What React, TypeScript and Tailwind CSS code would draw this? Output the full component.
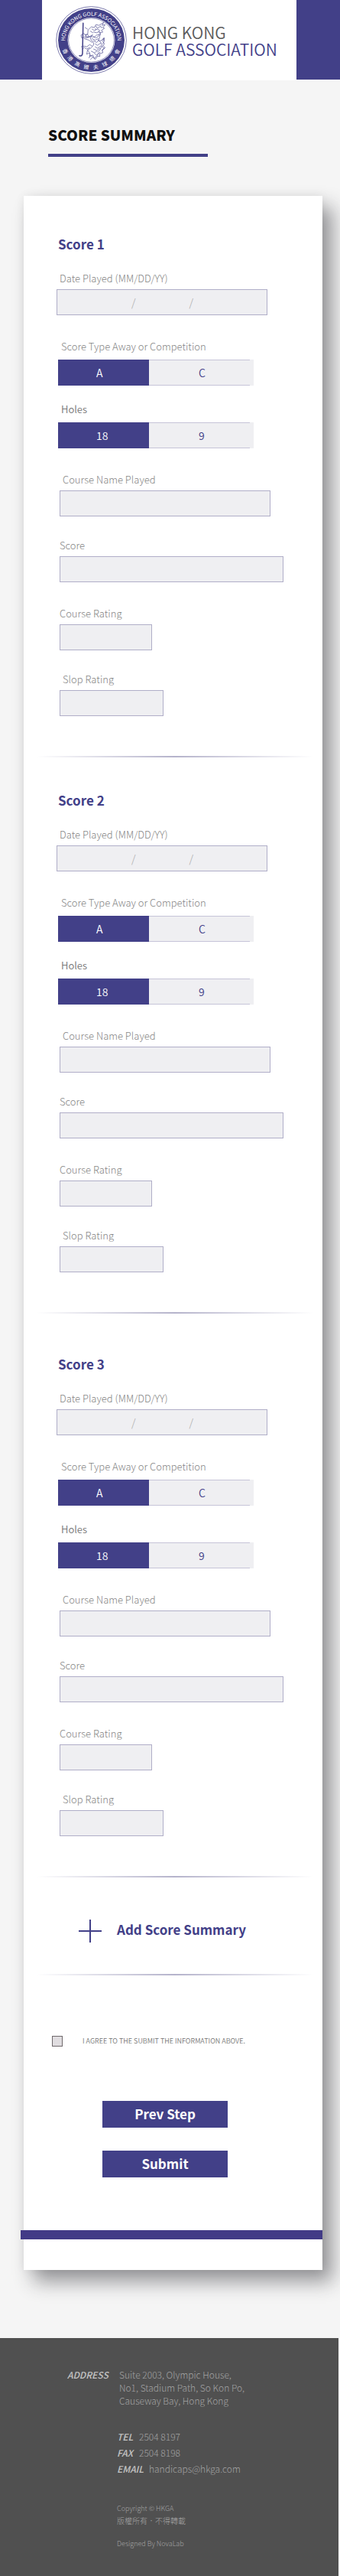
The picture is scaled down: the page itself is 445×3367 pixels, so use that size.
import { useId, useState } from 'react';

type FieldProps = { label: string; className: string; labelClass: string; inputClass: string };

const LABEL = 'block text-[13px] leading-5 font-light text-[#858585]';
const BOX = 'h-[34px] border border-[#b0aec8] bg-[#efeff2]';

function Field({ label, className, labelClass, inputClass }: FieldProps) {
  const id = useId();
  return (
    <div className={className}>
      <label htmlFor={id} className={`${LABEL} ${labelClass}`}>
        {label}
      </label>
      <input id={id} type="text" className={`${BOX} block max-w-full px-3 text-[13px] outline-none ${inputClass}`} />
    </div>
  );
}

function DateField() {
  const id = useId();
  const part = 'min-w-0 bg-transparent text-center text-[13px] outline-none';
  return (
    <div className="mt-[23px] pl-[43px]">
      <label htmlFor={id} className={`${LABEL} pl-1`}>
        Date Played (MM/DD/YY)
      </label>
      <div className={`${BOX} mt-1 flex w-[276px] max-w-full items-center text-[14px] font-light text-[#a8a8a8]`}>
        <input id={id} type="text" className={`${part} w-[97px]`} />
        <span>/</span>
        <input type="text" aria-label="Day" className={`${part} w-[70px]`} />
        <span>/</span>
        <input type="text" aria-label="Year" className={`${part} flex-1`} />
      </div>
    </div>
  );
}

type ToggleProps = { label: string; options: [string, string]; className: string; labelClass: string };

function Toggle({ label, options, className, labelClass }: ToggleProps) {
  const id = useId();
  const [active, setActive] = useState(0);
  const on = 'bg-[#424088] border-[#424088] text-white';
  const off = 'bg-[#efeff2] border-[#c6c4d8] text-[#424088]';
  return (
    <div className={`pl-[45px] ${className}`}>
      <p id={id} className={`pl-1 text-[13px] leading-5 ${labelClass}`}>
        {label}
      </p>
      <div role="group" aria-labelledby={id} className="mt-[7px] flex h-[34px] text-[14px] font-[350]">
        <button
          type="button"
          aria-pressed={active === 0}
          onClick={() => setActive(0)}
          className={`w-[119px] border-y pl-[50px] text-left ${active === 0 ? on : off}`}
        >
          {options[0]}
        </button>
        <button
          type="button"
          aria-pressed={active === 1}
          onClick={() => setActive(1)}
          className={`w-[132px] border-y pl-[65px] text-left ${active === 1 ? on : off}`}
        >
          {options[1]}
        </button>
        <span className="w-[5px] bg-[#efeff2]" />
      </div>
    </div>
  );
}

function Divider() {
  return (
    <div className="mr-3 ml-[17px] h-[2px] bg-linear-to-r from-transparent via-[#b5b3cb] to-transparent" />
  );
}

function ScoreSection({ index, className }: { index: number; className: string }) {
  return (
    <section className={className}>
      <h2 className="pl-[45px] text-[17px] leading-6 font-bold text-[#424088]">Score {index}</h2>
      <DateField />
      <Toggle
        label="Score Type Away or Competition"
        options={['A', 'C']}
        className="mt-[31px]"
        labelClass="font-light text-[#858585]"
      />
      <Toggle label="Holes" options={['18', '9']} className="mt-[21px]" labelClass="font-[350] text-[#777777]" />
      <Field label="Course Name Played" className="mt-[31px] pl-[47px]" labelClass="pl-1" inputClass="mt-1 w-[276px]" />
      <Field label="Score" className="mt-7 pl-[47px]" labelClass="" inputClass="mt-1 w-[293px]" />
      <Field label="Course Rating" className="mt-[31px] pl-[47px]" labelClass="" inputClass="mt-1 w-[121px]" />
      <Field label="Slop Rating" className="mt-7 pl-[47px]" labelClass="pl-1" inputClass="mt-1 w-[136px]" />
    </section>
  );
}

const RING_CHARS = ['香', '港', '高', '爾', '夫', '球', '總', '會'];
const RING_ANGLES = [66, 48, 29, 10, -9, -28, -47, -65];

function Emblem() {
  return (
    <svg viewBox="-46 -46 92 92" preserveAspectRatio="none" className="h-[89px] w-[93px] shrink-0" aria-hidden="true">
      <circle r="45.3" fill="#fff" stroke="#424088" strokeWidth="0.7" />
      <circle r="43" fill="#424088" />
      <circle r="30.6" fill="#fff" />
      <circle r="29.6" fill="none" stroke="#424088" strokeWidth="0.6" />
      <path id="ring-top" d="M-34 1 A34 34 0 0 1 34 1" fill="none" />
      <text fill="#fff" fontSize="7" textAnchor="middle">
        <textPath href="#ring-top" startOffset="50%">
          HONG KONG GOLF ASSOCIATION
        </textPath>
      </text>
      {RING_CHARS.map((char, i) => (
        <text
          key={char}
          y="39.5"
          fill="#fff"
          fontSize="7"
          textAnchor="middle"
          transform={`rotate(${RING_ANGLES[i]})`}
        >
          {char}
        </text>
      ))}
      <g fill="none" stroke="#424088" strokeLinecap="round" strokeLinejoin="round">
        <path d="M-10.6 -23 L-11.4 18 Q-11.8 22 -15.4 21" strokeWidth="1.5" />
        <g strokeWidth="0.65">
          <path d="M-13 -7 l3-2 3 2 2-1 2 3-3 2-3-1-3 1z M-8 -5 l5 1 4-3 M-9 -2 l6 2 4 3" />
          <path d="M-4 -14 l4-4 4 1 2-4 4 1 6-4-2 4 4-1-3 4 2 1-4 3 2 2-4 1 1 3-5 0-3 3-5-1-4 1-3-3 3-1z" />
          <path d="M1 -15 l3 2 4-2 3 2 M3 -11 l4 1 4-2 M6 -19 l2 3 4-3 M-1 -12 l3 2 M5 -15 h1 M-5 -15 l-3-2 M9 -12 l3 3 M12 -18 l2 1" />
          <path d="M2 -7 q-5 3-2 7 q5 4 2 8 q-3 4-7 5 l2 3 M10 -8 q2 5-1 8 q6 4 4 9 q-1 5-5 7" />
          <path d="M3 -5 l3 2 3-2 M1 -2 l4 2 4-2 M3 1 l4 2 3-3 M5 5 l3 2 4-3 M5 9 l3 2 4-3 M3 12 l4 2 4-3 M0 15 l4 2 3-2" />
          <path d="M-13 9 l4-1 3 1 4-3 3 2 M-12 12 l3-2 3 2 4-2 M-5 14 l-1 5 4-2 0 5 4-2 2 5 3-4 4 1 0-4 4-1-1-4 3-2-3-2 3-4-2-3 2-5-3 3-3 1" />
          <path d="M-3 24 l2-4 3 3 M-1 26 l3-3 3 3 3-4 M4 18 l3 2 3-3 M8 20 l3-4 M14 0 l2-3 1 4-2 4 M16 8 l2 2-4 4" />
        </g>
      </g>
    </svg>
  );
}

function ContactRow({ label, value, labelClass, href }: { label: string; value: string; labelClass: string; href: string }) {
  return (
    <div className="flex">
      <dt className={`font-medium text-[#c3c3c3] italic ${labelClass}`}>{label}</dt>
      <dd>
        <a href={href}>{value}</a>
      </dd>
    </div>
  );
}

export default function App() {
  const agreeId = useId();
  const action = 'h-[35px] w-[164px] bg-[#424088] pb-[2px] text-[17px] leading-6 font-bold text-white';
  return (
    <div className="bg-[#f5f5f5] font-['Noto_Sans_CJK_TC','Noto_Sans',sans-serif]">
      <header className="h-[104px] bg-[#424088] pr-[57px] pl-[55px]">
        <div className="flex h-[105px] items-center gap-[7px] bg-white pl-[18px]">
          <Emblem />
          <div className="text-[21px] leading-[22px] font-[350] whitespace-nowrap">
            <div className="text-[#5a5a5a]">HONG KONG</div>
            <div className="text-[#424088]">GOLF ASSOCIATION</div>
          </div>
        </div>
      </header>

      <main className="pt-[60px] pb-[89px]">
        <div className="pl-[63px]">
          <h1 className="text-[19px] leading-6 font-black text-[#111111]">SCORE SUMMARY</h1>
          <div className="mt-[13px] h-1 w-[209px] bg-[#424088]" />
        </div>

        <form
          onSubmit={(event) => event.preventDefault()}
          className="mt-[51px] mr-[23px] ml-[31px] bg-white pb-10 shadow-[13px_15px_24px_rgba(30,30,38,0.45),0_0_12px_rgba(0,0,0,0.06)]"
        >
          <ScoreSection index={1} className="pt-[51px] pb-[52px]" />
          <Divider />
          <ScoreSection index={2} className="pt-11 pb-[52px]" />
          <Divider />
          <ScoreSection index={3} className="pt-[54px] pb-[52px]" />
          <Divider />

          <button type="button" className="mt-[55px] ml-[72px] flex h-[30px] items-center gap-5 text-[17px] leading-6 font-bold text-[#424088]">
            <svg viewBox="0 0 30 30" className="size-[30px]" aria-hidden="true">
              <path d="M15 0V30M0 15H30" stroke="#424088" strokeWidth="2" />
            </svg>
            <span className="pb-1">Add Score Summary</span>
          </button>
          <div className="mt-[41px]">
            <Divider />
          </div>

          <div className="mt-[76px] ml-[37px] flex h-5 items-center gap-[26px]">
            <input
              id={agreeId}
              type="checkbox"
              className="size-[14px] appearance-none border border-[#6f696c] bg-[#e0dde0] checked:bg-[#424088]"
            />
            <label htmlFor={agreeId} className="text-[9px] leading-4 font-[350] text-[#777777]">
              I AGREE TO THE SUBMIT THE INFORMATION ABOVE.
            </label>
          </div>

          <div className="mt-[68px] ml-[103px] flex flex-col gap-[30px]">
            <button type="button" className={action}>
              Prev Step
            </button>
            <button type="submit" className={action}>
              Submit
            </button>
          </div>
          <div className="mt-[69px] -ml-1 h-3 bg-[#423b86]" />
        </form>
      </main>

      <footer className="mr-[2px] bg-[#505050] pt-[39px] pb-[34px] text-[12px] leading-[17px] font-light text-[#a3a3a3]">
        <div className="flex pl-[88px]">
          <div className="w-[68px] shrink-0 font-medium text-[#c3c3c3] italic">ADDRESS</div>
          <address className="not-italic">
            Suite 2003, Olympic House,
            <br />
            No1, Stadium Path, So Kon Po,
            <br />
            Causeway Bay, Hong Kong
          </address>
        </div>
        <div className="pl-[153px]">
          <dl className="mt-7 leading-[21px]">
            <ContactRow label="TEL" value="2504 8197" labelClass="w-[29px]" href="tel:25048197" />
            <ContactRow label="FAX" value="2504 8198" labelClass="w-[29px]" href="tel:25048198" />
            <ContactRow label="EMAIL" value="handicaps@hkga.com" labelClass="w-[42px]" href="mailto:handicaps@hkga.com" />
          </dl>
          <div className="mt-[34px] text-[9px] leading-4">
            <p>Copyright © HKGA</p>
            <p className="text-[10px]">版權所有．不得轉載</p>
            <p className="mt-[14px]">Designed By NovaLab</p>
          </div>
        </div>
      </footer>
    </div>
  );
}
